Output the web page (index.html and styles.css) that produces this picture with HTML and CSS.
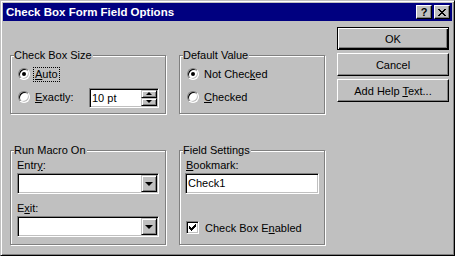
FILE: index.html
```html
<!DOCTYPE html>
<html lang="en">
<head>
    <meta charset="UTF-8">
    <title>Check Box Form Field Options</title>
    <link rel="stylesheet" href="styles.css">
</head>
<body>
<div class="window">
    <div class="titlebar">
        <span class="title">Check Box Form Field Options</span>
        <div class="caption-buttons">
            <span class="cap-btn">?</span>
            <span class="cap-btn">
                <svg width="8" height="7" viewBox="0 0 8 7" shape-rendering="crispEdges">
                    <path d="M0 0h2v1h1v1h2v-1h1v-1h2v1h-1v1h-1v1h-1v1h1v1h1v1h1v1h-2v-1h-1v-1h-2v1h-1v1h-2v-1h1v-1h1v-1h1v-1h-1v-1h-1v-1h-1z" fill="#000"/>
                </svg>
            </span>
        </div>
    </div>
    <div class="client">
        <div class="groups">
            <div class="group group-size">
                <div class="group-title">Check Box Size</div>
                <div class="options">
                    <div class="option">
                        <span class="radio on"></span>
                        <span class="opt-label focus"><u>A</u>uto</span>
                    </div>
                    <div class="option">
                        <span class="radio"></span>
                        <span class="opt-label"><u>E</u>xactly:</span>
                        <div class="field spin">
                            <span class="field-text">10 pt</span>
                            <div class="spin-btns">
                                <span class="small-btn"><i class="arrow-up"></i></span>
                                <span class="small-btn"><i class="arrow-down"></i></span>
                            </div>
                        </div>
                    </div>
                </div>
            </div>
            <div class="group group-default">
                <div class="group-title">Default Value</div>
                <div class="options">
                    <div class="option">
                        <span class="radio on"></span>
                        <span class="opt-label">Not Chec<u>k</u>ed</span>
                    </div>
                    <div class="option">
                        <span class="radio"></span>
                        <span class="opt-label"><u>C</u>hecked</span>
                    </div>
                </div>
            </div>
            <div class="group group-macro">
                <div class="group-title">Run Macro On</div>
                <div class="field-label">Entr<u>y</u>:</div>
                <div class="field combo">
                    <span class="field-text"></span>
                    <span class="small-btn combo-btn"><i class="arrow-combo"></i></span>
                </div>
                <div class="field-label second">E<u>x</u>it:</div>
                <div class="field combo">
                    <span class="field-text"></span>
                    <span class="small-btn combo-btn"><i class="arrow-combo"></i></span>
                </div>
            </div>
            <div class="group group-settings">
                <div class="group-title">Field Settings</div>
                <div class="field-label"><u>B</u>ookmark:</div>
                <div class="field bookmark">
                    <span class="field-text">Check1</span>
                </div>
                <div class="check-row">
                    <span class="field checkbox">
                        <svg width="7" height="7" viewBox="0 0 7 7" shape-rendering="crispEdges">
                            <path d="M0 2H1V3H2V4H3V3H4V2H5V1H6V0H7V3H6V4H5V5H4V6H3V7H2V6H1V5H0Z" fill="#000"/>
                        </svg>
                    </span>
                    <span>Check Box E<u>n</u>abled</span>
                </div>
            </div>
        </div>
        <div class="buttons">
            <button class="btn default">OK</button>
            <button class="btn">Cancel</button>
            <button class="btn">Add Help <u>T</u>ext...</button>
        </div>
    </div>
</div>
</body>
</html>
```

FILE: styles.css
```css
body {
    margin: 0;
    background: #c0c0c0;
    font-family: "Liberation Sans", Arial, sans-serif;
    font-size: 11px;
    color: #000;
}

.window {
    width: 455px;
    height: 256px;
    box-sizing: border-box;
    border: 1px solid;
    border-color: #c0c0c0 #000 #000 #c0c0c0;
    box-shadow: inset 1px 1px #fff, inset -1px -1px #808080;
    padding: 2px;
    background: #c0c0c0;
}

/* title bar */
.titlebar {
    height: 18px;
    background: #000080;
    display: flex;
    align-items: center;
    padding-left: 3px;
}

.title {
    color: #fff;
    font-weight: bold;
    font-size: 11.5px;
}

.caption-buttons {
    margin-left: auto;
    margin-right: 2px;
    display: flex;
    gap: 2px;
}

.cap-btn {
    width: 16px;
    height: 14px;
    box-sizing: border-box;
    border: 1px solid;
    border-color: #fff #000 #000 #fff;
    box-shadow: inset -1px -1px #808080;
    background: #c0c0c0;
    display: flex;
    align-items: center;
    justify-content: center;
    font-weight: bold;
    font-size: 11px;
    line-height: 12px;
}

/* client area */
.client {
    display: flex;
    padding: 6px 0 0 7px;
}

.groups {
    display: grid;
    grid-template-columns: 156px 146px;
    grid-template-rows: 59px 95px;
    column-gap: 13px;
    row-gap: 36px;
    padding-top: 28px;
}

.group {
    box-sizing: border-box;
    border: 1px solid #808080;
    box-shadow: inset 1px 1px #fff, 1px 1px #fff;
    padding: 0 6px;
}

.group-title {
    display: table;
    margin: -7px 0 0 -3px;
    padding-right: 1px;
    line-height: 13px;
    background: #c0c0c0;
}

.options {
    margin-top: 2px;
    padding-left: 1px;
    display: flex;
    flex-direction: column;
    gap: 3px;
}

.option {
    display: flex;
    align-items: center;
    height: 20px;
}

.radio {
    width: 12px;
    height: 12px;
    box-sizing: border-box;
    border-radius: 50%;
    border: 1px solid;
    border-color: #808080 #fff #fff #808080;
    box-shadow: inset 1px 1px #000, inset -1px -1px #c0c0c0;
    background: #fff;
    display: flex;
    align-items: center;
    justify-content: center;
    margin-right: 3px;
}

.radio.on::after {
    content: "";
    width: 4px;
    height: 4px;
    border-radius: 50%;
    background: #000;
}

.opt-label {
    border: 1px dotted transparent;
    padding: 0 1px;
    line-height: 13px;
}

.opt-label.focus {
    border-color: #000;
}

/* sunken fields */
.field {
    box-sizing: border-box;
    border: 1px solid;
    border-color: #808080 #fff #fff #808080;
    box-shadow: inset 1px 1px #000, inset -1px -1px #c0c0c0;
    padding: 1px;
    background: #fff;
    display: flex;
}

.field-text {
    flex: 1;
    padding-left: 1px;
    line-height: 16px;
}

.spin {
    margin-left: auto;
    width: 70px;
    height: 20px;
    margin-top: 1px;
}

.spin-btns {
    width: 16px;
    display: flex;
    flex-direction: column;
}

.small-btn {
    box-sizing: border-box;
    border: 1px solid;
    border-color: #c0c0c0 #000 #000 #c0c0c0;
    box-shadow: inset 1px 1px #fff, inset -1px -1px #808080;
    background: #c0c0c0;
    display: flex;
    align-items: center;
    justify-content: center;
    flex: 1;
}

.arrow-up, .arrow-down, .arrow-combo {
    width: 0;
    height: 0;
    border-left: 3px solid transparent;
    border-right: 3px solid transparent;
}

.arrow-up {
    border-bottom: 3px solid #000;
}

.arrow-down {
    border-top: 3px solid #000;
}

.arrow-combo {
    border-left-width: 4px;
    border-right-width: 4px;
    border-top: 4px solid #000;
}

.field-label {
    margin-top: 2px;
    line-height: 13px;
}

.field-label.second {
    margin-top: 8px;
}

.combo {
    width: 142px;
    height: 21px;
    margin-top: 1px;
}

.combo-btn {
    flex: none;
    width: 16px;
}

.group-settings {
    padding-left: 5px;
}

.group-settings .group-title {
    margin-left: -2px;
}

.group-settings .field-label {
    padding-left: 1px;
}

.bookmark {
    width: 134px;
    height: 21px;
    margin-top: 1px;
}

.check-row {
    display: flex;
    align-items: center;
    gap: 6px;
    margin-top: 27px;
    margin-left: 1px;
    height: 13px;
}

.checkbox {
    width: 13px;
    height: 13px;
    padding: 2px;
}

/* push buttons */
.buttons {
    margin-left: 12px;
    display: flex;
    flex-direction: column;
    gap: 3px;
}

.btn {
    width: 112px;
    height: 23px;
    box-sizing: border-box;
    border: 1px solid;
    border-color: #fff #000 #000 #fff;
    box-shadow: inset -1px -1px #808080;
    background: #c0c0c0;
    font-family: inherit;
    font-size: 11px;
    color: #000;
    padding: 0;
}

.btn.default {
    border-color: #000;
    box-shadow: inset 1px 1px #fff, inset -1px -1px #000, inset -2px -2px #808080;
}
```
